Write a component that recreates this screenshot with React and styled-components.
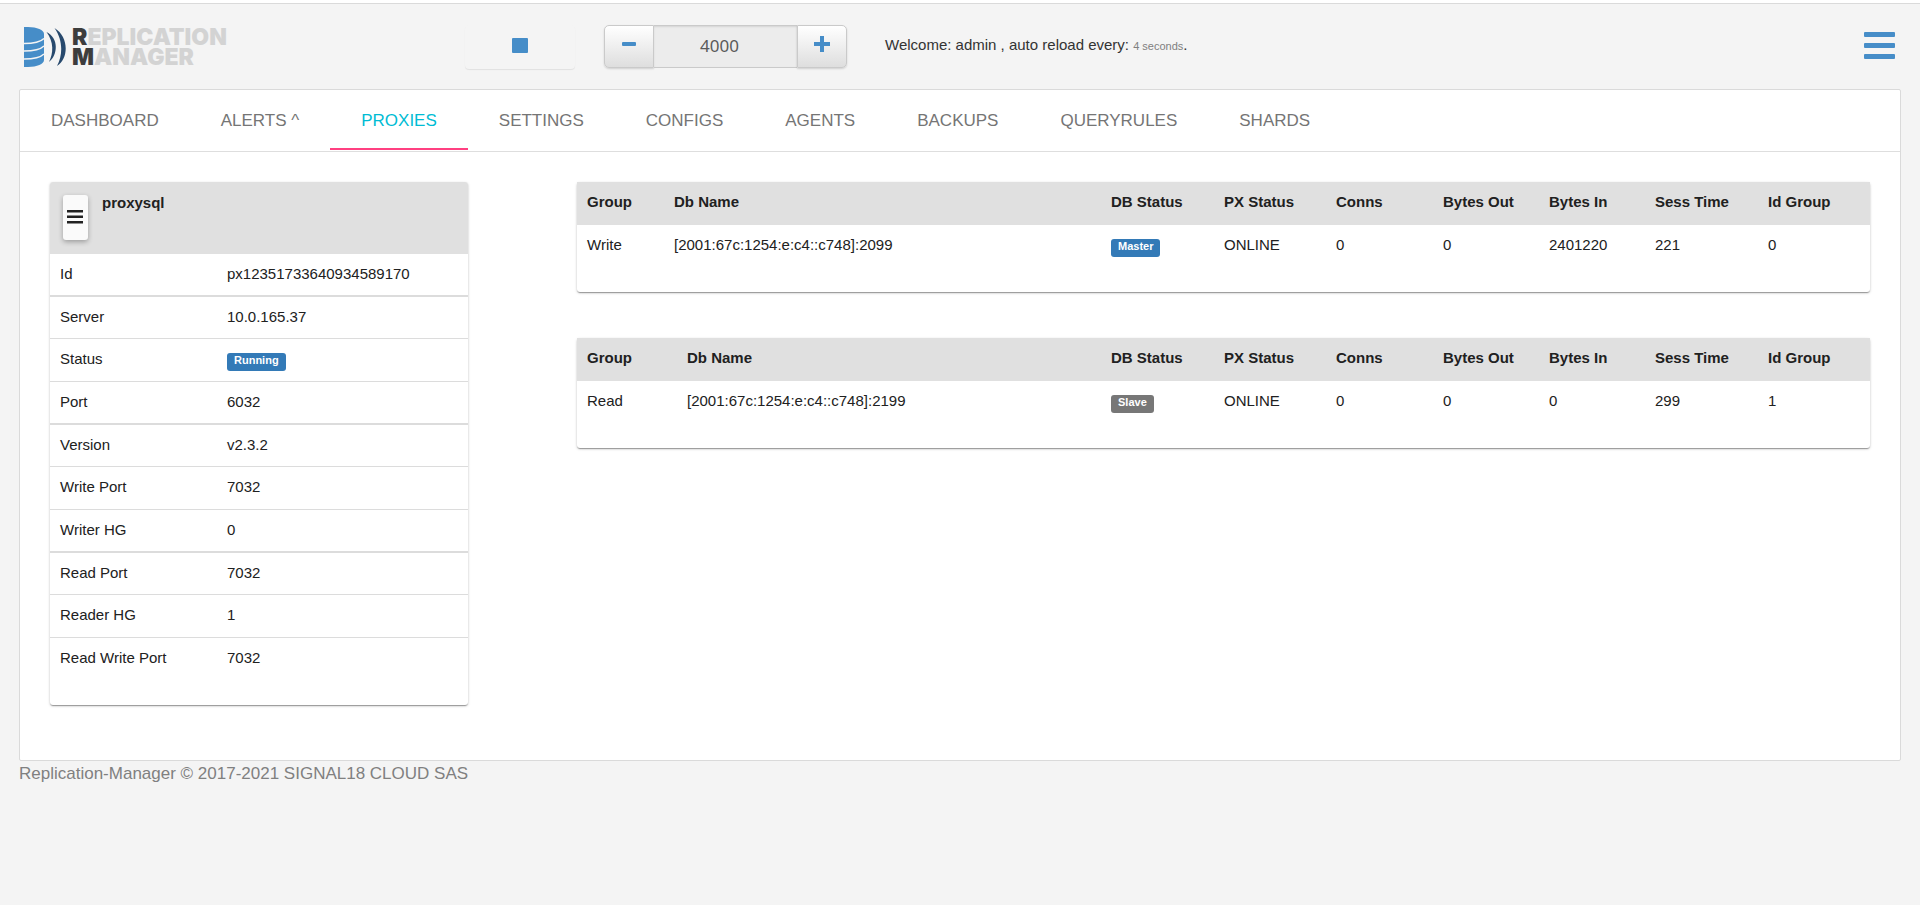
import React, { useState } from "react";
import styled, { createGlobalStyle } from "styled-components";

const GlobalStyle = createGlobalStyle`
	* {
		box-sizing: border-box;
	}
	body {
		margin: 0;
		background: #f4f4f4;
		color: #212121;
		font-family: "Liberation Sans", Arial, sans-serif;
		font-size: 15px;
		line-height: 20px;
	}
	button,
	input {
		font-family: inherit;
		margin: 0;
	}
`;

const TopStripe = styled.div`
	height: 4px;
	background: #fff;
	border-bottom: 1px solid #dadada;
`;
const Header = styled.header`
	min-height: 85px;
	padding: 0 25px 0 24px;
	display: flex;
	align-items: center;
`;
const Logo = styled.a`
	width: 441px;
	display: flex;
	align-items: center;
	gap: 6px;
	text-decoration: none;
	& > svg {
		display: block;
		flex: none;
	}
`;
const LogoText = styled.span`
	color: #d3d3d3;
	font-family: Inter, "Open Sans", sans-serif;
	font-size: 23px;
	font-weight: 900;
	line-height: 20px;
	& > span {
		display: block;
	}
	& b {
		color: #3d3d3d;
		font-weight: 900;
	}
`;
const StopButton = styled.button`
	width: 110px;
	height: 44px;
	margin-right: 29px;
	padding: 0 0 2px;
	display: flex;
	align-items: center;
	justify-content: center;
	border: 0;
	border-radius: 4px;
	background: #f4f4f4;
	box-shadow: 0 1px 1px rgba(0, 0, 0, 0.08);
	cursor: pointer;
`;
const Stepper = styled.div`
	height: 43px;
	margin-right: 38px;
	display: flex;
`;
const StepButton = styled.button`
	width: 50px;
	padding: 0 0 5px;
	display: flex;
	align-items: center;
	justify-content: center;
	border: 1px solid #cacaca;
	border-radius: ${(props) => (props.$side === "left" ? "5px 0 0 5px" : "0 5px 5px 0")};
	background: linear-gradient(#fff, #dedede);
	box-shadow: 0 1px 2px rgba(0, 0, 0, 0.15);
	cursor: pointer;
`;
const StepInput = styled.input`
	width: 143px;
	padding: 0 12px 2px 0;
	border: solid #cacaca;
	border-width: 1px 0;
	border-radius: 0;
	background: #ececec;
	box-shadow: inset 0 1px 2px rgba(0, 0, 0, 0.1);
	color: #5a5a5a;
	font-family: "Noto Sans", sans-serif;
	font-size: 17px;
	text-align: center;
`;
const Welcome = styled.p`
	margin: 0;
	padding-bottom: 2px;
	color: #333;
	& > small {
		color: #808080;
		font-size: 11px;
	}
`;
const MenuButton = styled.button`
	margin-left: auto;
	padding: 0 0 2px;
	border: 0;
	background: none;
	cursor: pointer;
	& > svg {
		display: block;
	}
`;

const Panel = styled.main`
	margin: 0 19px;
	border: 1px solid #dadada;
	border-radius: 2px;
	background: #fff;
`;
const Tabs = styled.nav`
	padding-bottom: 1px;
	display: flex;
	border-bottom: 1px solid #dedede;
`;
const Tab = styled.button`
	height: 60px;
	padding: 3px 31px 0;
	border: solid transparent;
	border-width: 0 0 2px;
	border-color: ${(props) => (props.$active ? "#ff4081" : "transparent")};
	background: none;
	color: ${(props) => (props.$active ? "#00bcd4" : "#757575")};
	font-size: 17px;
	cursor: pointer;
`;
const Content = styled.div`
	padding: 30px 30px 55px;
	display: grid;
	grid-template-columns: minmax(300px, 418px) minmax(0, 1fr);
	gap: 109px;
	align-items: start;
`;
const GroupList = styled.div`
	display: grid;
	gap: 46px;
`;
const Card = styled.section`
	padding-bottom: 24px;
	border-radius: 3px;
	background: #fff;
	box-shadow: 0 1px 3px rgba(0, 0, 0, 0.2), 0 1px 1px rgba(0, 0, 0, 0.18),
		0 2px 1px -1px rgba(0, 0, 0, 0.16);
`;
const CardHeader = styled.div`
	height: 72px;
	padding: 13px;
	display: flex;
	align-items: flex-start;
	gap: 14px;
	border-radius: 3px 3px 0 0;
	background: #e0e0e0;
	& > h2 {
		margin: 0;
		font-size: 15px;
		line-height: 16px;
	}
`;
const CardMenu = styled.button`
	width: 25px;
	height: 45px;
	padding: 0 1px 2px 0;
	display: flex;
	align-items: center;
	justify-content: center;
	border: 0;
	border-radius: 3px;
	background: #fafafa;
	box-shadow: 0 2px 5px rgba(0, 0, 0, 0.3);
	cursor: pointer;
`;
const Table = styled.table`
	width: 100%;
	border-spacing: 0;
	table-layout: fixed;
	text-align: left;
	& th,
	& td {
		height: 43px;
		padding: 10px 0 0 10px;
		vertical-align: top;
		white-space: nowrap;
	}
`;
const DetailTable = styled(Table)`
	& th {
		width: 167px;
		font-weight: normal;
	}
	& th,
	& td {
		border-bottom: 1px solid #dcdcdc;
	}
	& tr:nth-child(3n + 1) > * {
		border-bottom-width: 2px;
	}
	& tr:nth-child(3n + 2) > * {
		height: 42px;
	}
	& tr:last-child > * {
		border-bottom: 0;
	}
`;
const GroupTable = styled(Table)`
	& thead th {
		background: #e0e0e0;
	}
`;
const Col = styled.col`
	width: ${(props) => (props.$width ? `${props.$width}px` : "auto")};
`;
const Label = styled.span`
	padding: 1px 7px 5px;
	display: inline-block;
	border-radius: 3px;
	background: ${(props) => (props.$primary ? "#337ab7" : "#777")};
	color: #fff;
	font-size: 11px;
	font-weight: bold;
	line-height: 12px;
`;
const Footer = styled.footer`
	padding: 0 19px;
	color: #808080;
	font-size: 17px;
	line-height: 26px;
`;

const TABS = [
	"DASHBOARD",
	"ALERTS ^",
	"PROXIES",
	"SETTINGS",
	"CONFIGS",
	"AGENTS",
	"BACKUPS",
	"QUERYRULES",
	"SHARDS",
];

const DETAILS = [
	["Id", "px12351733640934589170"],
	["Server", "10.0.165.37"],
	["Status", <Label $primary>Running</Label>],
	["Port", "6032"],
	["Version", "v2.3.2"],
	["Write Port", "7032"],
	["Writer HG", "0"],
	["Read Port", "7032"],
	["Reader HG", "1"],
	["Read Write Port", "7032"],
];

const COLUMNS = [
	"Group",
	"Db Name",
	"DB Status",
	"PX Status",
	"Conns",
	"Bytes Out",
	"Bytes In",
	"Sess Time",
	"Id Group",
];

const GROUPS = [
	{
		firstWidth: 87,
		row: ["Write", "[2001:67c:1254:e:c4::c748]:2099", <Label $primary>Master</Label>, "ONLINE", "0", "0", "2401220", "221", "0"],
	},
	{
		firstWidth: 100,
		row: ["Read", "[2001:67c:1254:e:c4::c748]:2199", <Label>Slave</Label>, "ONLINE", "0", "0", "0", "299", "1"],
	},
];

function LogoMark() {
	return (
		<svg width="42" height="40" viewBox="0 0 42 40">
			<path d="M0 0H4C13 0 20 3 20 7V33C20 37 13 40 4 40H0Z" fill="#468dc8" />
			<g fill="none" stroke="#f4f4f4" strokeWidth="1.4">
				<path d="M0 16.500C9 16.500 17 14.500 20 11.500" />
				<path d="M0 24C9 24 17 22 20 19" />
				<path d="M0 32C9 32 17 30 20 27" />
			</g>
			<path d="M22.500 5C35 11 34 28 25 35C29.500 26 30 15 22.500 5Z" fill="#27496d" />
			<path d="M30.500 1C45 10 45 31 33 39C39 28 39 13 30.500 1Z" fill="#27496d" />
		</svg>
	);
}

function Groups() {
	return (
		<GroupList>
			{GROUPS.map(({ firstWidth, row }) => (
				<Card key={row[0]}>
					<GroupTable>
						<colgroup>
							{[firstWidth, 0, 113, 112, 107, 106, 106, 113, 112].map((width, i) => (
								<Col key={i} $width={width} />
							))}
						</colgroup>
						<thead>
							<tr>
								{COLUMNS.map((name) => (
									<th key={name} scope="col">
										{name}
									</th>
								))}
							</tr>
						</thead>
						<tbody>
							<tr>
								{row.map((cell, i) => (
									<td key={i}>{cell}</td>
								))}
							</tr>
						</tbody>
					</GroupTable>
				</Card>
			))}
		</GroupList>
	);
}

function App() {
	const [tab, setTab] = useState("PROXIES");
	const [interval, setInterval] = useState(4000);

	return (
		<>
			<GlobalStyle />
			<TopStripe />
			<Header>
				<Logo href="#">
					<LogoMark />
					<LogoText>
						<span>
							<b>R</b>EPLICATION
						</span>
						<span>
							<b>M</b>ANAGER
						</span>
					</LogoText>
				</Logo>
				<StopButton aria-label="Stop reload">
					<svg width="16" height="15">
						<rect width="16" height="15" rx="1" fill="#468dc8" />
					</svg>
				</StopButton>
				<Stepper>
					<StepButton $side="left" aria-label="Decrease" onClick={() => setInterval(interval - 1000)}>
						<svg width="14" height="4">
							<rect width="14" height="4" rx="1" fill="#468dc8" />
						</svg>
					</StepButton>
					<StepInput aria-label="Reload interval" value={interval} readOnly />
					<StepButton $side="right" aria-label="Increase" onClick={() => setInterval(interval + 1000)}>
						<svg width="16" height="16">
							<path d="M6 0H10V6H16V10H10V16H6V10H0V6H6Z" fill="#468dc8" />
						</svg>
					</StepButton>
				</Stepper>
				<Welcome>
					Welcome: admin , auto reload every: <small>{interval / 1000} seconds</small>.
				</Welcome>
				<MenuButton aria-label="Menu">
					<svg width="31" height="27" fill="#468dc8">
						<rect width="31" height="5" rx="1" />
						<rect y="11" width="31" height="5" rx="1" />
						<rect y="22" width="31" height="5" rx="1" />
					</svg>
				</MenuButton>
			</Header>
			<Panel>
				<Tabs>
					{TABS.map((name) => (
						<Tab key={name} $active={name === tab} onClick={() => setTab(name)}>
							{name}
						</Tab>
					))}
				</Tabs>
				<Content>
					<Card>
						<CardHeader>
							<CardMenu aria-label="Proxy menu">
								<svg width="16" height="14" fill="#212121">
									<rect width="16" height="2.500" />
									<rect y="5.500" width="16" height="2.500" />
									<rect y="11" width="16" height="2.500" />
								</svg>
							</CardMenu>
							<h2>proxysql</h2>
						</CardHeader>
						<DetailTable>
							<tbody>
								{DETAILS.map(([name, value]) => (
									<tr key={name}>
										<th scope="row">{name}</th>
										<td>{value}</td>
									</tr>
								))}
							</tbody>
						</DetailTable>
					</Card>
					<Groups />
				</Content>
			</Panel>
			<Footer>Replication-Manager © 2017-2021 SIGNAL18 CLOUD SAS</Footer>
		</>
	);
}

export default App;
